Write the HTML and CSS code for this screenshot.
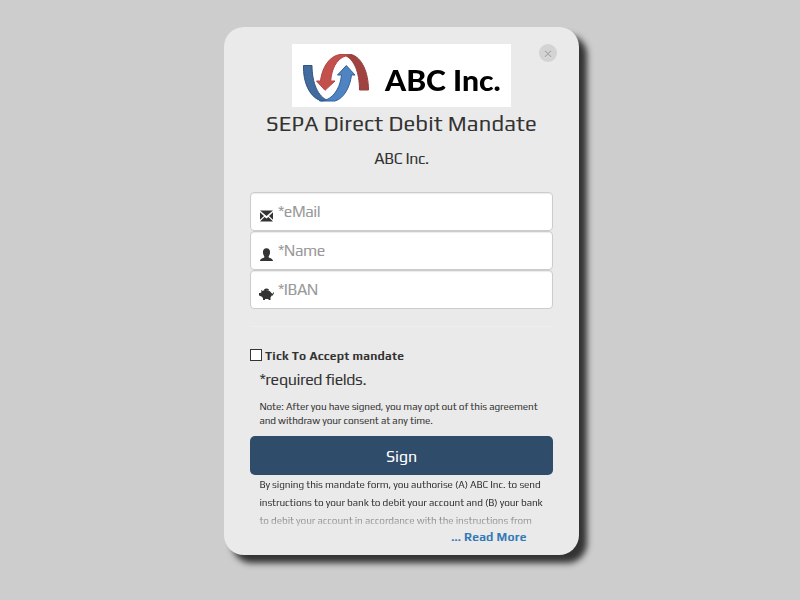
FILE: index.html
```html
<!DOCTYPE html>
<html lang="en">
<head>
<meta charset="utf-8">
<title>SEPA Direct Debit Mandate</title>
<link rel="stylesheet" href="styles.css">
</head>
<body>
<main class="card">
  <button class="close" type="button" aria-label="Close"><svg width="8" height="8" viewBox="0 0 8 8"><path d="M1 1l6 6M7 1L1 7"/></svg></button>
  <div class="logo">
    <svg width="82" height="63" viewBox="0 0 82 63">
      <path fill="#426b9e" stroke="#30547f" d="M11.5 21.5H20C20 39 26 53 36 56.5H28C17 52 11 38 11.5 21.5Z"/>
      <path fill="#4f83c1" stroke="#30619b" d="M27 56.5C30 57.5 33 56.5 35 55.5C43 52 48.500 42 49.500 31H45.500L54.300 21.500L63 31H59.500C58 43 52 54.500 43 57H29Z"/>
      <path fill="#a04240" stroke="#93403e" d="M49 10.5H59C70 13 76.500 29 76.500 46H67.500C67.500 28 62 15 53 11.500Z"/>
      <path fill="#c4504d" stroke="#b34643" d="M48 10.500H58L53.500 12C44 15 39.500 26 38.700 37H43L33 46.300L24.500 37H28.500C30 24 37 12 48 10.500Z"/>
    </svg>
    <span class="logo-name">ABC Inc.</span>
  </div>
  <h1>SEPA Direct Debit Mandate</h1>
  <h2>ABC Inc.</h2>
  <form>
    <div class="field"><svg width="15" height="14" viewBox="0 0 15 14"><path d="M1 1.500H14L7.500 7ZM1 3.300L5 7L1 10.700ZM14 3.300L10 7L14 10.700ZM1 12.500L5.500 8L7.500 9.500L9.500 8L14 12.500Z"/></svg><span>*eMail</span></div>
    <div class="field"><svg width="15" height="14" viewBox="0 0 15 14"><path d="M7.500.3C10.300.3 11.300 2.500 11 5C10.700 7 9.700 8 9.500 9C9.500 10 14 10.300 14 13H1C1 10.300 5.500 10 5.500 9C5.300 8 4.300 7 4 5C3.700 2.500 4.700.3 7.500.3Z"/></svg><span>*Name</span></div>
    <div class="field"><svg width="15" height="14" viewBox="0 0 15 14"><path d="M2 3L4 4C5 2.500 10 2.500 12 5.500L13.500 7L14.200 5L15 6L13.800 8.500H12.700L11.500 10.500V13H9.500V12H6V13H4V11L2.500 9.500L0 8.500V6H1.500L2.500 5Z"/><path d="M5 2.500Q7.500 .5 10 2.500L9.500 3.200H5.500Z"/></svg><span>*IBAN</span></div>
    <hr>
    <label class="accept"><span class="box"></span><b>Tick To Accept mandate</b></label>
    <p class="required">*required fields.</p>
    <p class="note"><span>Note: After you have signed, you may opt out of this agreement</span><span>and withdraw your consent at any time.</span></p>
    <button class="sign" type="button">Sign</button>
    <div class="terms"><span>By signing this mandate form, you authorise (A) ABC Inc. to send</span><span>instructions to your bank to debit your account and (B) your bank</span><span>to debit your account in accordance with the instructions from</span></div>
    <a class="more">... Read More</a>
  </form>
</main>
</body>
</html>
```
FILE: styles.css
```css
* { box-sizing: border-box; }
body {
  margin: 0;
  height: 600px;
  overflow: hidden;
  background: #cdcdcd;
  color: #333;
  font-family: Play, Roboto, sans-serif;
}
.card {
  position: relative;
  width: 355px;
  height: 528px;
  margin: 27px 0 0 224px;
  padding: 17px 26.4px 0;
  border-radius: 20px;
  background: #eaeaea;
  box-shadow: 8px 8px 6px #333;
}
.close {
  position: absolute;
  top: 17px;
  right: 22px;
  width: 18px;
  height: 18px;
  padding: 0;
  border: 0;
  border-radius: 50%;
  background: #d3d3d3;
  display: grid;
  place-items: center;
}
.close svg { fill: none; stroke: #aaa; stroke-width: 1.2; margin-top: 2px; filter: drop-shadow(0 1px 0 #e8e8e8); }
.logo {
  display: flex;
  width: 219px;
  height: 63px;
  margin-left: 41.6px;
  background: #fff;
}
.logo-name {
  margin-left: 11px;
  color: #000;
  font: 900 28px/73px Lato, sans-serif;
  white-space: nowrap;
  transform: scaleX(1.075);
  transform-origin: 0 0;
}
h1, h2, p { margin: 0; font-weight: 400; white-space: nowrap; }
h1 { height: 33px; font-size: 22px; line-height: 33px; text-align: center; letter-spacing: .1px; }
h2 { height: 52px; font-size: 16px; line-height: 37px; text-align: center; letter-spacing: -.45px; }
.field {
  display: flex;
  width: 302.4px;
  height: 39px;
  padding-left: 8px;
  border: 1px solid #ccc;
  border-radius: 4px;
  background: #fff;
  box-shadow: inset 0 1px 1px rgba(0, 0, 0, .08);
  color: #999;
  font-size: 16px;
  line-height: 37px;
  letter-spacing: -.5px;
}
.field svg { margin: 16px 3.6px 0 0; fill: #333; }
hr { margin: 17px 0 0; border: 0; border-top: 1px solid #eee; }
.accept { display: flex; height: 20px; margin-top: 19px; font-size: 12px; line-height: 20px; letter-spacing: .24px; }
.box { width: 12px; height: 12px; margin: 3px 2.6px 0 0; border: 1px solid #333; background: #fff; }
.required { height: 34px; padding-left: 9px; font-size: 16px; line-height: 28px; letter-spacing: -.39px; }
.note { height: 36px; padding-left: 9px; font-size: 10px; line-height: 14px; letter-spacing: -.1px; }
.note span, .terms span { display: block; }
.sign {
  display: block;
  width: 302.4px;
  height: 39px;
  padding: 0;
  border: 0;
  border-radius: 5px;
  background: #304c6b;
  color: #fff;
  font: 16px/41px Play, Roboto, sans-serif;
}
.terms {
  height: 51px;
  overflow: hidden;
  padding: 1px 0 0 9px;
  font-size: 10px;
  line-height: 18px;
  letter-spacing: -.1px;
  white-space: nowrap;
  -webkit-mask-image: linear-gradient(#000 0, #000 31px, transparent 58px);
  mask-image: linear-gradient(#000 0, #000 31px, transparent 58px);
}
.more { display: block; margin-right: 26px; color: #337ab7; font-size: 12px; font-weight: 700; line-height: 23px; letter-spacing: .2px; text-align: right; }
```
